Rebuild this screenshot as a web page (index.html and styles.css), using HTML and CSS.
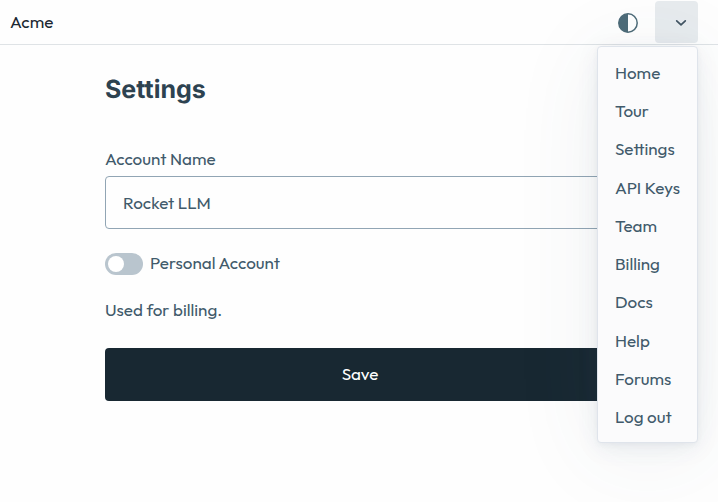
FILE: index.html
```html
<!DOCTYPE html>
<html lang="en">
<head>
<meta charset="utf-8">
<title>Settings</title>
<link rel="stylesheet" href="styles.css">
</head>
<body>
<header class="topbar">
  <a class="brand">Acme</a>
  <div class="actions">
    <svg class="theme-icon" viewBox="0 0 20 20"><circle cx="10" cy="10" r="9.2"/><path d="M10 .7a9.3 9.3 0 0 0 0 18.6z"/></svg>
    <div class="dropdown">
      <button class="menu-button" aria-label="Menu"><svg class="chevron" viewBox="0 0 12 8"><path d="M1.7 1.8 6 5.8l4.3-4"/></svg></button>
      <nav class="menu">
        <a>Home</a>
        <a>Tour</a>
        <a>Settings</a>
        <a>API Keys</a>
        <a>Team</a>
        <a>Billing</a>
        <a>Docs</a>
        <a>Help</a>
        <a>Forums</a>
        <a>Log out</a>
      </nav>
    </div>
  </div>
</header>
<main class="content">
  <h1>Settings</h1>
  <div class="label">Account Name</div>
  <div class="field"><span>Rocket LLM</span></div>
  <div class="switch-row"><span class="switch"></span><span class="switch-label">Personal Account</span></div>
  <p class="note">Used for billing.</p>
  <button class="save">Save</button>
</main>
</body>
</html>
```
FILE: styles.css
```css
* { box-sizing: border-box; }
body {
  margin: 0;
  height: 502px;
  overflow: hidden;
  background: #fefefe;
  color: #415a6b;
  font: 17px/24px Outfit, Lato, sans-serif;
}
.topbar {
  display: flex;
  justify-content: space-between;
  height: 45px;
  padding: 1px 20px 0 10px;
  border-bottom: 1px solid #dfe3e6;
}
.brand { color: #1b2832; line-height: 42px; }
.actions { display: flex; gap: 17px; }
.theme-icon { width: 20px; height: 20px; margin-top: 12px; fill: #4d6b78; }
.theme-icon circle { fill: none; stroke: #4d6b78; stroke-width: 1.5; }
.dropdown { position: relative; }
.menu-button {
  display: block;
  width: 43px;
  height: 42px;
  padding: 0 0 0 8px;
  border: 0;
  border-radius: 4px;
  background: #e7ebee;
}
.chevron { display: block; width: 12px; height: 8px; margin: 1px auto 0; fill: none; stroke: #415462; stroke-width: 1.7; stroke-linecap: round; stroke-linejoin: round; }
.menu {
  position: absolute;
  top: 45px;
  right: 0;
  width: 101px;
  height: 397px;
  padding: 7px 0 0 17px;
  border: 1px solid #dfe4eb;
  border-radius: 4px;
  background: #fbfbfc;
  box-shadow: 0 2px 5px rgba(65,84,120,.05), 0 5px 22px rgba(65,84,120,.09), 0 10px 90px rgba(65,84,98,.08);
}
.menu a { display: block; height: 38.23px; line-height: 38.23px; white-space: nowrap; }
.content { width: 510px; margin: 27px 0 0 105px; }
h1 { margin: 0; padding-top: 1px; color: #2d4250; font: 700 25px/34px Inter, sans-serif; text-rendering: geometricPrecision; }
.label { margin-top: 39px; line-height: 25px; }
.field {
  height: 53px;
  margin-top: 5px;
  padding-left: 17px;
  border: 1px solid #91a5b4;
  border-radius: 4px;
  line-height: 51px;
}
.switch-row { display: flex; align-items: center; gap: 7px; height: 24px; margin-top: 23px; }
.switch { width: 38px; height: 22px; padding: 3px; border-radius: 11px; background: #b9c5ce; }
.switch-label { padding-bottom: 2px; }
.switch::before { content: ""; display: block; width: 16px; height: 16px; border-radius: 50%; background: #fff; }
.note { margin: 21px 0 0; line-height: 25px; }
.save {
  display: block;
  width: 100%;
  height: 53px;
  margin-top: 26px;
  padding: 0 0 2px;
  border: 0;
  border-radius: 4px;
  background: #182832;
  color: #fff;
  font: inherit;
}
```
